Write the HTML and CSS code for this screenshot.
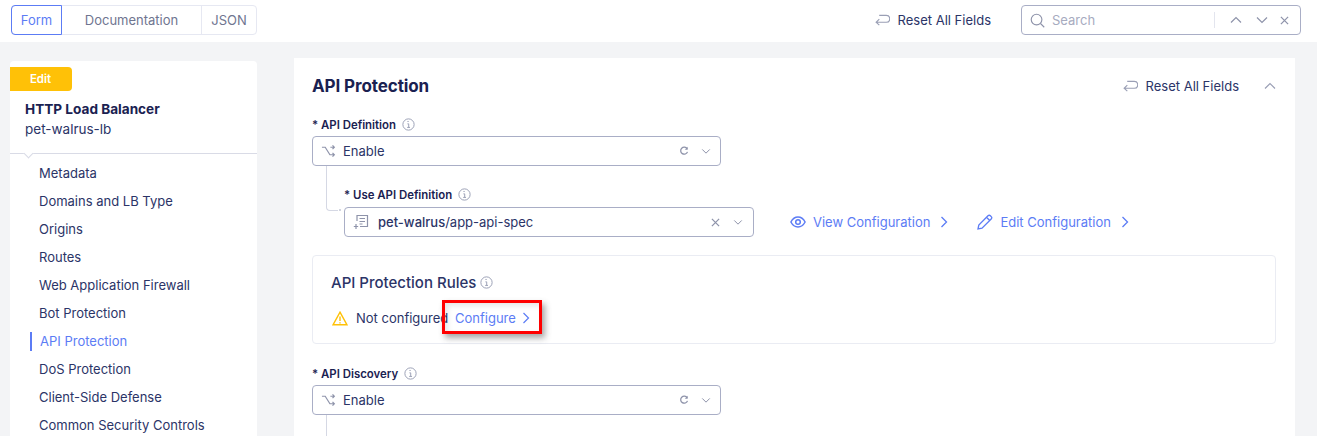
FILE: index.html
```html
<!DOCTYPE html>
<html lang="en">
<head>
<meta charset="UTF-8">
<meta name="viewport" content="width=device-width, initial-scale=1.0">
<title>HTTP Load Balancer</title>
<link rel="stylesheet" href="styles.css">
</head>
<body>
  <header class="topbar">
    <div class="tabs">
      <div class="tab tab-form active">Form</div>
      <div class="tab tab-docs">Documentation</div>
      <div class="tab tab-json">JSON</div>
    </div>
    <div class="top-right">
      <div class="reset">
        <svg class="reset-icon" viewBox="0 0 16 12"><path d="M4.500 1h7.500a3.700 3.700 0 0 1 0 7.400H1.200M4.600 5l-3.400 3.400 3.400 3.100"/></svg>
        <span>Reset All Fields</span>
      </div>
      <div class="search">
        <svg class="search-icon" viewBox="0 0 16 16"><circle cx="7" cy="7" r="5.700"/><path d="M11.200 11.200l4 4"/></svg>
        <span class="search-text">Search</span>
        <span class="search-sep"></span>
        <svg class="search-btn" viewBox="0 0 12 8"><path d="M1 6.500l5-5 5 5"/></svg>
        <svg class="search-btn" viewBox="0 0 12 8"><path d="M1 1.500l5 5 5-5"/></svg>
        <svg class="search-x" viewBox="0 0 10 10"><path d="M1 1l8 8M9 1l-8 8"/></svg>
      </div>
    </div>
  </header>

  <div class="content">
    <aside class="sidebar">
      <div class="badge">Edit</div>
      <div class="side-title">HTTP Load Balancer</div>
      <div class="side-sub">pet-walrus-lb</div>
      <div class="side-divider"><span class="notch"></span></div>
      <nav class="side-nav">
        <div class="nav-item">Metadata</div>
        <div class="nav-item">Domains and LB Type</div>
        <div class="nav-item">Origins</div>
        <div class="nav-item">Routes</div>
        <div class="nav-item">Web Application Firewall</div>
        <div class="nav-item">Bot Protection</div>
        <div class="nav-item current">API Protection</div>
        <div class="nav-item">DoS Protection</div>
        <div class="nav-item">Client-Side Defense</div>
        <div class="nav-item">Common Security Controls</div>
      </nav>
    </aside>

    <main class="panel">
      <div class="panel-head">
        <h1>API Protection</h1>
        <div class="reset">
          <svg class="reset-icon" viewBox="0 0 16 12"><path d="M4.500 1h7.500a3.700 3.700 0 0 1 0 7.400H1.200M4.600 5l-3.400 3.400 3.400 3.100"/></svg>
          <span>Reset All Fields</span>
        </div>
        <svg class="collapse" viewBox="0 0 12 8"><path d="M1 6.500l5-5 5 5"/></svg>
      </div>

      <div class="field-label">* API Definition <svg class="info" viewBox="0 0 12 12"><circle cx="6" cy="6" r="5.200"/><path d="M5 3.200h1.200M5 5.400h1.200v3.200M4.800 8.700h2.600"/></svg></div>
      <div class="select select-main">
        <svg class="select-icon" viewBox="0 0 16 14"><path d="M1 3h3.500l5 8H14M10 3h4M12.300 1l1.900 2-1.900 2M12.300 9l1.900 2-1.900 2"/></svg>
        <span class="select-text">Enable</span>
        <svg class="refresh" viewBox="0 0 12 12"><path d="M9.800 3.400A4.200 4.200 0 1 0 10.200 7"/><path class="solid" d="M10.400 1v3.400H7z"/></svg>
        <svg class="chev" viewBox="0 0 12 8"><path d="M1.500 1.500L6 6l4.500-4.500"/></svg>
      </div>

      <div class="nested">
        <div class="field-label">* Use API Definition <svg class="info" viewBox="0 0 12 12"><circle cx="6" cy="6" r="5.200"/><path d="M5 3.200h1.200M5 5.400h1.200v3.200M4.800 8.700h2.600"/></svg></div>
        <div class="select-row">
          <div class="select select-sub">
            <svg class="doc-icon" viewBox="0 0 16 16"><path d="M4 7V1.500h10.500v11H7M6.500 4.500h5.500M6.500 7.500h5.500M6.500 10h3M3 10v5M.8 12.500h4.400"/></svg>
            <span class="select-text"><span class="ns">pet-walrus</span>/app-api-spec</span>
            <svg class="clear" viewBox="0 0 10 10"><path d="M1 1l8 8M9 1l-8 8"/></svg>
            <svg class="chev" viewBox="0 0 12 8"><path d="M1.500 1.500L6 6l4.500-4.500"/></svg>
          </div>
          <div class="link link-view">
            <svg class="eye" viewBox="0 0 16 12"><path d="M.9 6C2.600 2.800 5 1.100 8 1.100s5.400 1.700 7.100 4.900C13.400 9.200 11 10.900 8 10.900S2.600 9.200.9 6z"/><circle cx="8" cy="6" r="2.300"/></svg>
            <span>View Configuration</span>
            <svg class="arrow" viewBox="0 0 8 12"><path d="M1.500 1l5 5-5 5"/></svg>
          </div>
          <div class="link link-edit">
            <svg class="pen" viewBox="0 0 16 16"><path d="M1 15l.8-4L11 1.800a1.700 1.700 0 0 1 2.400 0l.8.8a1.700 1.700 0 0 1 0 2.400L5 14.200zM9.500 3.300l3.200 3.200"/></svg>
            <span>Edit Configuration</span>
            <svg class="arrow" viewBox="0 0 8 12"><path d="M1.500 1l5 5-5 5"/></svg>
          </div>
        </div>
      </div>

      <section class="rules">
        <div class="rules-title">API Protection Rules <svg class="info" viewBox="0 0 12 12"><circle cx="6" cy="6" r="5.200"/><path d="M5 3.200h1.200M5 5.400h1.200v3.200M4.800 8.700h2.600"/></svg></div>
        <div class="rules-row">
          <svg class="warn" viewBox="0 0 16 15"><path d="M8 1.200L15 13.800H1z"/><path d="M8 5.500v4.500M8 11.200v1.200"/></svg>
          <span class="not-configured">Not configured</span>
          <span class="configure-wrap">
            <span class="configure">Configure</span>
            <svg class="arrow" viewBox="0 0 8 12"><path d="M1.500 1l5 5-5 5"/></svg>
            <span class="callout"></span>
          </span>
        </div>
      </section>

      <div class="field-label">* API Discovery <svg class="info" viewBox="0 0 12 12"><circle cx="6" cy="6" r="5.200"/><path d="M5 3.200h1.200M5 5.400h1.200v3.200M4.800 8.700h2.600"/></svg></div>
      <div class="select select-main">
        <svg class="select-icon" viewBox="0 0 16 14"><path d="M1 3h3.500l5 8H14M10 3h4M12.300 1l1.900 2-1.900 2M12.300 9l1.900 2-1.900 2"/></svg>
        <span class="select-text">Enable</span>
        <svg class="refresh" viewBox="0 0 12 12"><path d="M9.800 3.400A4.200 4.200 0 1 0 10.200 7"/><path class="solid" d="M10.400 1v3.400H7z"/></svg>
        <svg class="chev" viewBox="0 0 12 8"><path d="M1.500 1.500L6 6l4.500-4.500"/></svg>
      </div>
      <div class="tail"></div>
    </main>
  </div>
</body>
</html>
```

FILE: styles.css
```css
* {
  box-sizing: border-box;
}

html, body {
  height: 436px;
  overflow: hidden;
}

body {
  margin: 0;
  background: #f3f4f6;
  font-family: Inter, "Liberation Sans", sans-serif;
  font-size: 13px;
  color: #2b3467;
}

svg {
  fill: none;
  stroke-width: 1.2;
  flex: none;
}

/* Top bar */
.topbar {
  height: 42px;
  background: #fff;
  display: flex;
  justify-content: space-between;
  padding: 5px 16px 0 11px;
}

.tabs {
  display: flex;
  height: 30px;
  border: 1px solid #e6e8f2;
  border-radius: 4px;
}

.tab {
  display: flex;
  align-items: center;
  justify-content: center;
  color: #6f7590;
  border-left: 1px solid #e6e8f2;
}

.tab-form {
  width: 51px;
  margin: -1px 0 -1px -1px;
  height: 30px;
  border: 1px solid #5c7cf5;
  border-radius: 4px 0 0 4px;
  color: #5c7cf5;
}

.tab-docs {
  width: 139px;
  border-left: 0;
}

.tab-json {
  width: 55px;
}

.top-right {
  display: flex;
  align-items: flex-start;
  gap: 30px;
}

.reset {
  display: flex;
  align-items: center;
  gap: 8px;
  height: 30px;
  color: #2b3467;
}

.reset-icon {
  width: 15px;
  height: 12px;
  stroke: #9a9fb5;
}

.search {
  width: 280px;
  height: 30px;
  border: 1px solid #a9aec6;
  border-radius: 4px;
  display: flex;
  align-items: center;
  padding: 0 11px 0 8px;
}

.search-icon {
  width: 15px;
  height: 15px;
  stroke: #8e93aa;
}

.search-text {
  margin-left: 7px;
  color: #a7abbf;
  width: 165px;
}

.search-sep {
  width: 1px;
  height: 16px;
  background: #e3e5ee;
  margin-right: 15px;
}

.search-btn {
  width: 12px;
  height: 8px;
  stroke: #8e93aa;
  margin-right: 14px;
}

.search-x {
  width: 9px;
  height: 9px;
  margin-left: -2px;
  stroke: #8e93aa;
  stroke-width: 1.4;
}

/* Sidebar + panel */
.content {
  display: flex;
  align-items: flex-start;
  padding-left: 10px;
  gap: 37px;
}

.sidebar {
  width: 247px;
  height: 375px;
  overflow: hidden;
  margin-top: 19px;
  background: #fff;
  border-radius: 4px 4px 0 0;
  padding-top: 6px;
}

.badge {
  width: 63px;
  height: 24px;
  margin-left: -1px;
  background: #ffc107;
  color: #fff;
  font-size: 11.5px;
  font-weight: 600;
  border-radius: 0 4px 4px 0;
  display: flex;
  align-items: center;
  justify-content: center;
}

.side-title {
  margin: 9px 0 0 15px;
  font-size: 13.6px;
  font-weight: 700;
  color: #1a2151;
  line-height: 18px;
}

.side-sub {
  margin: 2px 0 0 15px;
  line-height: 18px;
  font-size: 13.5px;
  color: #2b3467;
}

.side-divider {
  position: relative;
  height: 1px;
  margin-top: 15px;
  background: #d9dbe6;
}

.notch {
  position: absolute;
  left: 15px;
  top: -3px;
  width: 7px;
  height: 7px;
  background: #fff;
  border-right: 1px solid #d9dbe6;
  border-bottom: 1px solid #d9dbe6;
  transform: rotate(45deg);
}

.side-nav {
  padding-top: 5px;
}

.nav-item {
  height: 28px;
  line-height: 28px;
  padding-left: 29px;
  color: #2b3467;
}

.nav-item.current {
  position: relative;
  padding-left: 30px;
  color: #5c7cf5;
}

.nav-item.current::before {
  content: '';
  position: absolute;
  left: 20px;
  top: 5px;
  width: 2px;
  height: 19px;
  background: #5c7cf5;
}

.panel {
  width: 1001px;
  height: 378px;
  overflow: hidden;
  margin-top: 16px;
  background: #fff;
  padding: 0 19px 0 18px;
}

.panel-head {
  height: 56px;
  display: flex;
  align-items: center;
  padding-bottom: 1px;
}

.panel-head h1 {
  margin: 0;
  font-size: 17px;
  font-weight: 700;
  letter-spacing: -.1px;
  color: #1a2151;
  flex: 1;
}

.panel-head .reset {
  margin-right: 25px;
}

.collapse {
  width: 12px;
  height: 8px;
  stroke: #9a9fb5;
}

.field-label {
  height: 20px;
  padding-top: 2px;
  display: flex;
  align-items: center;
  gap: 6px;
  font-size: 11.4px;
  font-weight: 600;
  color: #1a2151;
}

.info {
  width: 13px;
  height: 13px;
  margin-top: -2px;
  stroke: #9a9fb5;
  stroke-width: .9;
}

.select {
  height: 30px;
  border: 1px solid #a9aec6;
  border-radius: 4px;
  display: flex;
  align-items: center;
}

.select-main {
  width: 409px;
  margin-top: 2px;
  padding: 0 9px 0 8px;
}

.select-icon {
  width: 15px;
  height: 14px;
  stroke: #8e93aa;
  stroke-width: 1.3;
}

.select-text {
  margin-left: 7px;
  flex: 1;
  color: #2b3467;
}

.refresh {
  width: 10px;
  height: 10px;
  stroke: #8e93aa;
  stroke-width: 1.5;
  margin-right: 12px;
}

.solid {
  fill: #8e93aa;
  stroke: none;
}

.chev {
  width: 10px;
  height: 7px;
  stroke: #8e93aa;
}

.nested {
  position: relative;
  padding: 18px 0 0 32px;
}

/* elbow from the parent select down to the child one */
.nested::before {
  content: '';
  position: absolute;
  left: 14px;
  top: 0;
  width: 11px;
  height: 44px;
  border-left: 1px solid #d5d8e4;
  border-bottom: 1px solid #d5d8e4;
  border-bottom-left-radius: 4px;
}

.nested::after {
  content: '';
  position: absolute;
  left: 27px;
  top: 43px;
  width: 2px;
  height: 2px;
  border-radius: 50%;
  background: #c3c7d6;
}

.select-row {
  display: flex;
  align-items: center;
}

.select-sub {
  width: 410px;
  margin-top: 3px;
  padding: 0 10px 0 8px;
}

.doc-icon {
  width: 16px;
  height: 16px;
  stroke: #8e93aa;
}

.select-sub .select-text {
  margin-left: 9px;
}

.ns {
  font-weight: 500;
}

.clear {
  width: 9px;
  height: 9px;
  stroke: #8e93aa;
  stroke-width: 1.4;
  margin-right: 13px;
}

.link {
  display: flex;
  align-items: center;
  gap: 6px;
  color: #5c7cf5;
  margin-top: 3px;
}

.link-view {
  margin: 3px 29px 0 36px;
}

.link-view span {
  margin-right: 4px;
}

.link-edit {
  gap: 8px;
}

.link-edit span {
  margin-right: 2px;
}

.eye {
  width: 16px;
  height: 12px;
  stroke: #5c7cf5;
  stroke-width: 1.5;
  margin-right: 1px;
}

.pen {
  width: 16px;
  height: 16px;
  margin-right: -1px;
  stroke: #5c7cf5;
  stroke-width: 1.3;
}

.arrow {
  width: 8px;
  height: 12px;
  stroke: #5c7cf5;
  stroke-width: 1.3;
}

.rules {
  height: 89px;
  margin-top: 18px;
  border: 1px solid #eaecf3;
  border-radius: 4px;
  padding: 16px 18px;
  margin-bottom: 19px;
}

.rules-title {
  display: flex;
  align-items: center;
  gap: 4px;
  height: 20px;
  font-size: 15px;
  font-weight: 500;
  color: #2b3467;
}

.rules-title .info {
  margin-top: 1px;
}

.rules-row {
  display: flex;
  align-items: center;
  height: 20px;
  margin-top: 16px;
  padding-left: 1px;
}

.warn {
  width: 16px;
  height: 15px;
  stroke: #ffc107;
  stroke-width: 1.4;
}

.not-configured {
  margin-left: 8px;
  width: 99px;
  white-space: nowrap;
}

.configure-wrap {
  position: relative;
  display: flex;
  align-items: center;
  gap: 6px;
  color: #5c7cf5;
}

.configure-wrap .arrow {
  stroke-width: 1.2;
}

/* screenshot annotation drawn over the link */
.callout {
  position: absolute;
  left: -13px;
  top: -10px;
  width: 100px;
  height: 34px;
  border: 3px solid #f00;
  box-shadow: 3px 4px 6px rgba(60, 60, 60, .45), inset 3px 3px 5px rgba(60, 60, 60, .12);
}

.tail {
  width: 1px;
  height: 30px;
  margin-left: 14px;
  background: #d5d8e4;
}
```
